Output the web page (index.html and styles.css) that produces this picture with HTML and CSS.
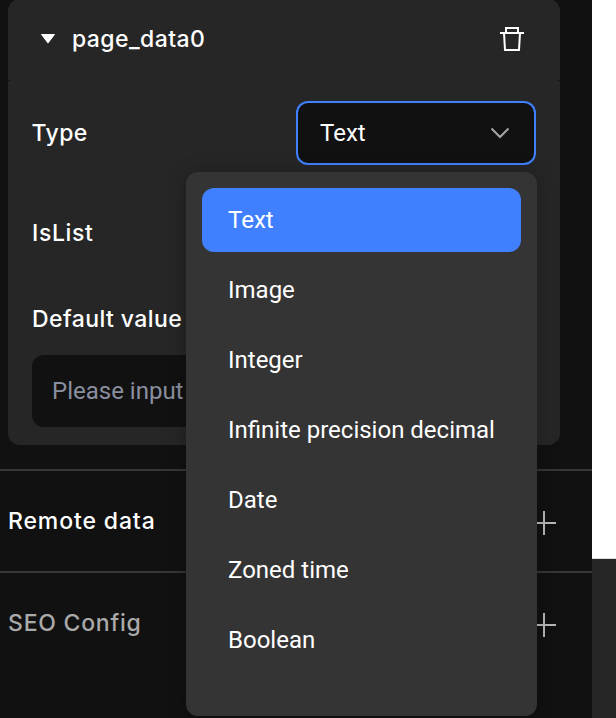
FILE: index.html
```html
<!DOCTYPE html>
<html lang="en">
<head>
<meta charset="utf-8">
<title>Page data</title>
<link rel="stylesheet" href="styles.css">
</head>
<body>
<div class="app">
  <aside class="sidebar">
    <section class="card">
      <header class="card-header">
        <svg class="caret" width="16" height="12" viewBox="0 0 16 12"><path d="M1.700 1.500h12.600L8 9.700z" fill="#fff" stroke="#fff" stroke-width="1.200" stroke-linejoin="round"/></svg>
        <span class="label name">page_data0</span>
        <svg class="trash" width="24" height="24" viewBox="0 0 24 24" fill="none" stroke="#fff" stroke-width="2"><path d="M0 6h24M6 6V1h12v5M4 6l1 17h14l1-17"/></svg>
      </header>
      <div class="card-body">
        <div class="row type-row">
          <span class="label type">Type</span>
          <div class="select">
            <span>Text</span>
            <svg width="20" height="12" viewBox="0 0 20 12" fill="none" stroke="#a5a5a5" stroke-width="2"><path d="M1.500 1.500L10 10l8.500-8.500"/></svg>
            <ul class="menu">
              <li class="option selected">Text</li>
              <li class="option">Image</li>
              <li class="option">Integer</li>
              <li class="option">Infinite precision decimal</li>
              <li class="option">Date</li>
              <li class="option">Zoned time</li>
              <li class="option">Boolean</li>
            </ul>
          </div>
        </div>
        <div class="row list-row"><span class="label islist">IsList</span></div>
        <div class="row default-row"><span class="label default">Default value</span></div>
        <div class="input">Please input</div>
      </div>
    </section>
    <section class="group">
      <span class="label remote">Remote data</span>
      <svg width="24" height="24" viewBox="0 0 24 24" stroke="#b8b8b8" stroke-width="2"><path d="M0 12h24M12 0v24"/></svg>
    </section>
    <section class="group muted">
      <span class="label seo">SEO Config</span>
      <svg width="24" height="24" viewBox="0 0 24 24" stroke="#b8b8b8" stroke-width="2"><path d="M0 12h24M12 0v24"/></svg>
    </section>
  </aside>
  <main class="canvas"><div class="page"></div></main>
</div>
</body>
</html>
```
FILE: styles.css
```css
* { box-sizing: border-box; }
body {
  margin: 0;
  overflow: hidden;
  background: #111;
  color: #fff;
  font: 24px/28px Roboto, sans-serif;
}
svg { display: block; flex: none; }
.app { display: flex; height: 718px; overflow: hidden; }
.sidebar { width: 592px; flex: none; background: #111; }
.canvas { flex: 1; background: #262626; }
.page { height: 559px; background: #fff; border-bottom: 1px solid #ddd; }

.card { width: 552px; margin: -1px 0 24px 8px; }
.card-header {
  display: flex;
  align-items: center;
  height: 82px;
  padding: 0 36px 2px 32px;
  border-radius: 12px 12px 3px 3px;
  background: #262626;
}
.name { margin-left: 16px; }
.trash { margin-left: auto; }
.card-body {
  height: 364px;
  padding: 20px 24px 18px;
  border-radius: 0 0 12px 12px;
  background: #262626;
}
.label {
  font-family: Inter, sans-serif;
  font-size: 23px;
  font-weight: 500;
  letter-spacing: .42px;
  white-space: nowrap;
}
.type { margin-left: -.5px; }
.islist { letter-spacing: .65px; }
.remote { letter-spacing: .88px; }
.seo { letter-spacing: .77px; }
.row { display: flex; align-items: center; justify-content: space-between; }
.type-row { height: 64px; }
.list-row { height: 72px; margin-top: 32px; }
.default-row { height: 32px; margin-top: 34px; }
.select {
  position: relative;
  display: flex;
  align-items: center;
  justify-content: space-between;
  width: 240px;
  height: 64px;
  padding: 0 24px 0 22px;
  border: 2px solid #4080ff;
  border-radius: 12px;
  background: #111;
}
.input {
  height: 72px;
  margin-top: 20px;
  padding: 22px 20px;
  border-radius: 12px;
  background: #111;
  color: #8a8f9f;
}
.menu {
  position: absolute;
  top: 69px;
  left: -112px;
  z-index: 2;
  width: 351px;
  height: 544px;
  margin: 0;
  padding: 16px;
  border-radius: 12px;
  background: #343434;
  box-shadow: 0 2px 20px rgba(0, 0, 0, .25);
  list-style: none;
}
.option {
  display: flex;
  align-items: center;
  height: 64px;
  margin-bottom: 6px;
  padding: 0 26px;
  border-radius: 12px;
  white-space: nowrap;
}
.selected { background: #4080ff; }
.group {
  display: flex;
  align-items: center;
  justify-content: space-between;
  height: 102px;
  padding: 4px 36px 0 8px;
  border-top: 2px solid #363636;
}
.group .label { margin-top: -4px; }
.muted .label { color: #aaa; }
```
